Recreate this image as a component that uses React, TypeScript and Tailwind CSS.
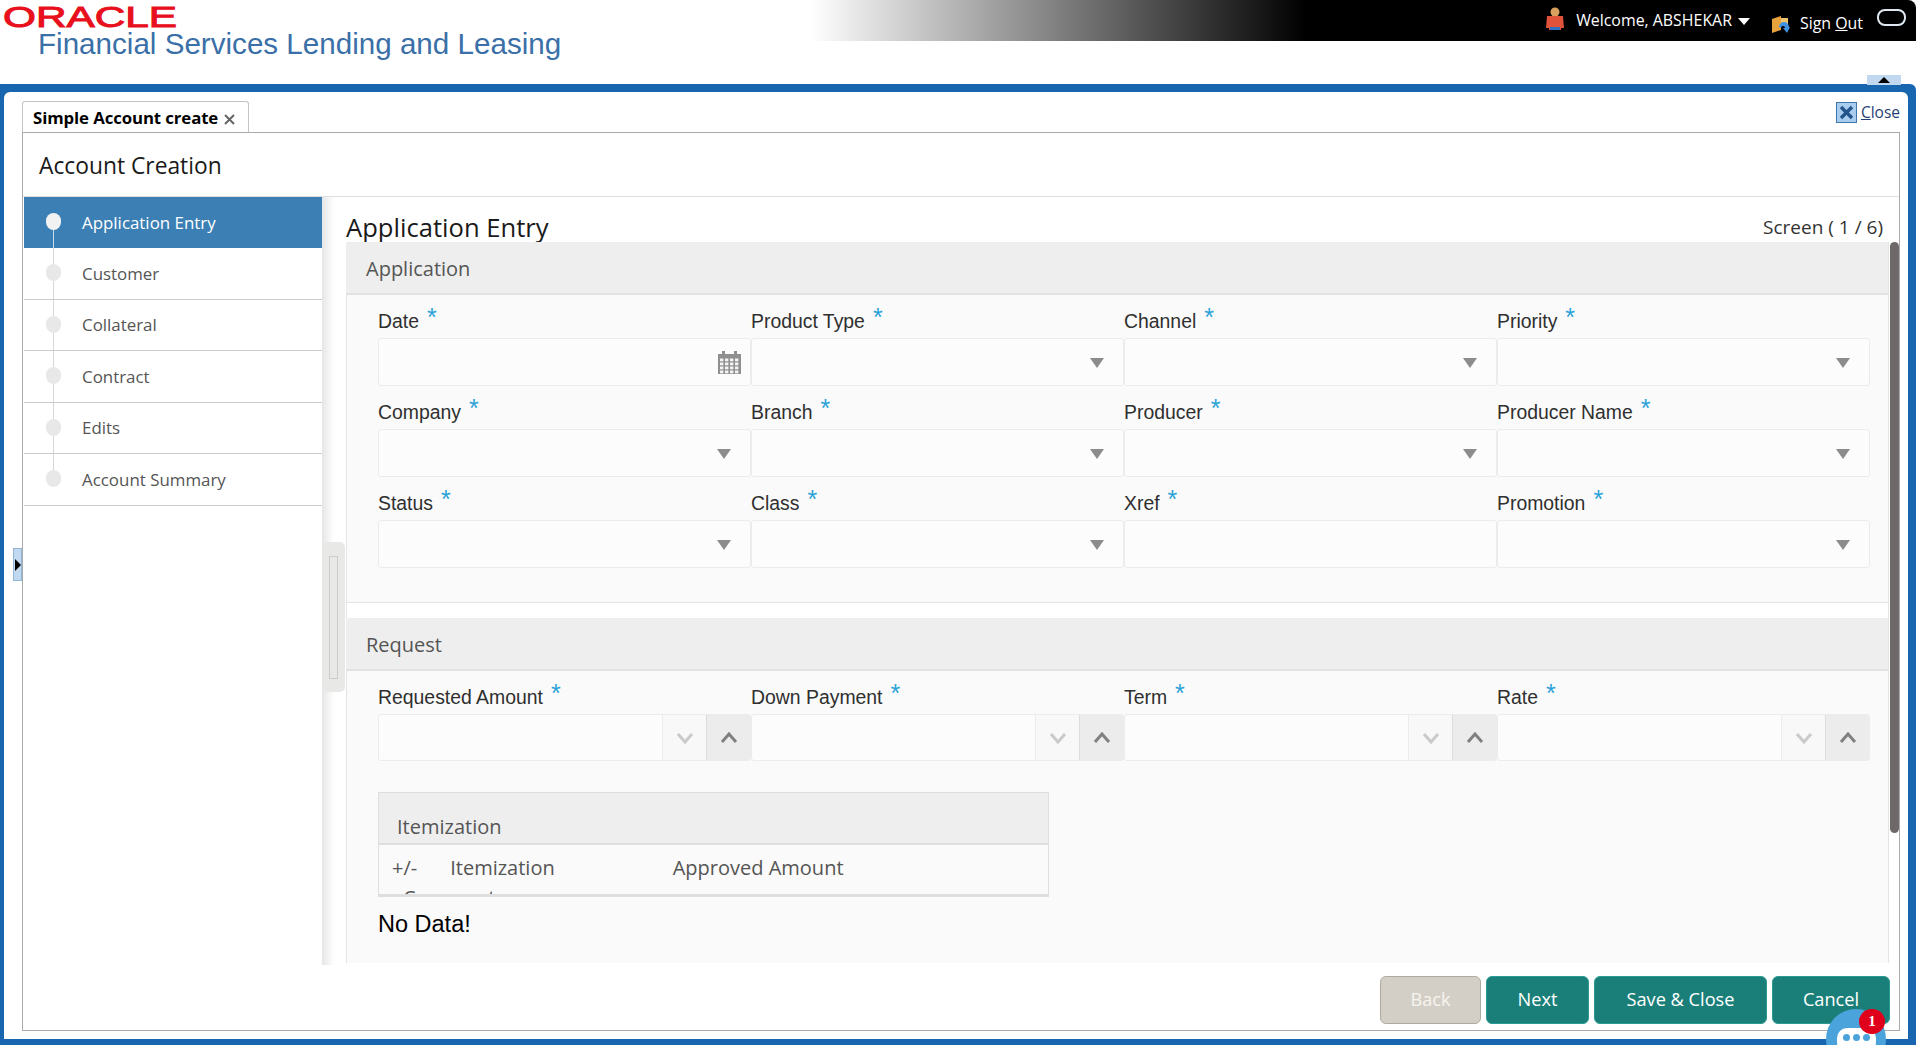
const SEGOE = "font-['Open_Sans',sans-serif]";

function Caret({ className = "" }: { className?: string }) {
  return (
    <svg width="14" height="10" viewBox="0 0 14 10" className={className}>
      <path d="M0 0h14L7 10z" fill="#8c8c8c" />
    </svg>
  );
}

function Calendar() {
  return (
    <svg width="25" height="25" viewBox="0 0 25 25" className="absolute right-[8px] top-[11px]">
      <path d="M1 4h23v20H1z" fill="#8f8f8f" />
      <path d="M5 1h3v5H5zM17 1h3v5h-3z" fill="#8f8f8f" />
      {[9, 13, 17, 21].map((y) =>
        [3, 8, 13, 18].map((x) => <rect key={`${x}-${y}`} x={x} y={y - 0.5} width="3.4" height="2.8" fill="#f4f4f4" />),
      )}
    </svg>
  );
}

function Label({ text }: { text: string }) {
  return (
    <div className="flex h-[43px] items-end pb-[6px] text-[19.4px] leading-[22px] text-[#2f2f2f] font-['Liberation_Sans',sans-serif]">
      <span className="whitespace-nowrap">{text}</span>
      <span className="relative top-[-4px] ml-[8px] text-[25px] leading-[22px] text-[#2ba2d8]">*</span>
    </div>
  );
}

type Kind = "date" | "select" | "text";

function Field({ label, kind }: { label: string; kind: Kind }) {
  return (
    <div>
      <Label text={label} />
      <div className="relative h-[48px] w-[373px] rounded-[3px] border border-[#ececec] bg-[#fcfcfd]">
        {kind === "date" && <Calendar />}
        {kind === "select" && <Caret className="absolute right-[19px] top-[19px]" />}
      </div>
    </div>
  );
}

function Spin({ label }: { label: string }) {
  return (
    <div>
      <Label text={label} />
      <div className="flex h-[47px] w-[373px] rounded-[3px] border border-[#ececec] bg-[#fcfcfd]">
        <div className="flex-1" />
        <div className="flex w-[44px] items-center justify-center border-l border-[#ececec] bg-[#f8f8f8]">
          <svg width="18" height="12" viewBox="0 0 18 12" fill="none" stroke="#cacaca" strokeWidth="3">
            <path d="M2 2l7 8 7-8" />
          </svg>
        </div>
        <div className="flex w-[44px] items-center justify-center border-l border-[#dcdcdc] bg-[#ececec]">
          <svg width="18" height="12" viewBox="0 0 18 12" fill="none" stroke="#808080" strokeWidth="3">
            <path d="M2 10l7-8 7 8" />
          </svg>
        </div>
      </div>
    </div>
  );
}

function SectionHeader({ title }: { title: string }) {
  return (
    <div className={`flex h-[53px] items-center border-b-2 border-[#e2e2e2] bg-[#eeeeee] pl-[20px] pt-[2px] text-[20px] text-[#555555] ${SEGOE}`}>
      {title}
    </div>
  );
}

const steps = ["Application Entry", "Customer", "Collateral", "Contract", "Edits", "Account Summary"];

function Step({ title, index }: { title: string; index: number }) {
  const active = index === 0;
  return (
    <div
      className={`relative flex items-center pl-[58px] text-[16.9px] ${
        active ? "h-[51px] bg-[#3b7fb5] text-white" : "h-[51.6px] border-b border-[#cccccc] bg-white text-[#555555]"
      }`}
    >
      {index > 0 && <div className="absolute left-[29px] top-0 h-[24px] w-px bg-[#d8d8d8]" />}
      {index < 5 && (
        <div className={`absolute bottom-0 left-[29px] top-[26px] w-px ${active ? "bg-[#c9dcea]" : "bg-[#d8d8d8]"}`} />
      )}
      <div
        className={`absolute left-[22px] top-[16px] h-[17px] w-[15px] rounded-full ${active ? "bg-[#f2f2f2]" : "bg-[#e8e8e8]"}`}
      />
      {title}
    </div>
  );
}

function ActionButton({ text, width, disabled }: { text: string; width: string; disabled?: boolean }) {
  return (
    <div
      className={`flex h-[48px] items-center justify-center rounded-[6px] border text-[18.2px] ${width} ${
        disabled ? "border-[#aeaaa2] bg-[#d4cfc6] text-[#f7f5f0]" : "border-[#2a9a92] bg-[#1b7f79] text-white"
      }`}
    >
      {text}
    </div>
  );
}

export default function App() {
  return (
    <div className={`relative h-[1045px] w-[1916px] overflow-hidden bg-white ${SEGOE}`}>
      {/* Masthead */}
      <header className="relative flex h-[84px]">
        <div className="w-[800px] pl-[3px]">
          <div className="h-[29px] origin-left scale-x-[1.41] font-['Liberation_Sans',sans-serif] text-[30px] leading-[33px] text-[#e8101c] [-webkit-text-stroke:1px_#e8101c]">
            ORACLE
          </div>
          <div className="ml-[35px] whitespace-nowrap font-['Liberation_Sans',sans-serif] text-[29.6px] leading-[30px] text-[#3a6fa8]">
            Financial Services Lending and Leasing
          </div>
        </div>
        <div className="flex h-[41px] flex-1 items-center justify-end rounded-tr-[8px] bg-[linear-gradient(90deg,#ffffff_10px,#000000_506px)] font-['Open_Sans',sans-serif] text-[15.9px] text-white">
          <svg width="20" height="24" viewBox="0 0 20 24" className="mb-[3px]">
            <circle cx="10" cy="5" r="4.5" fill="#d9a15e" />
            <path d="M2 9h16l1 12h-3v2H4v-2H1z" fill="#e0533a" />
            <path d="M5 20h10v3H5z" fill="#2f6fc0" />
          </svg>
          <span className="ml-[11px] mt-[1px] whitespace-nowrap">Welcome, ABSHEKAR</span>
          <svg width="12" height="7" viewBox="0 0 12 7" className="ml-[6px] mt-[2px]">
            <path d="M0 0h12L6 7z" fill="#ffffff" />
          </svg>
          <svg width="20" height="20" viewBox="0 0 20 20" className="ml-[21px] mt-[9px]">
            <path d="M1 4l9-3v14l-9 3z" fill="#e8a33d" />
            <path d="M10 3h7v6h-7z" fill="#f0c46c" />
            <path d="M8 12a5 5 0 0 1 10 0l1 0-3 6-4-5 2 0a2 2 0 0 0-4 0z" fill="#3f93e0" />
          </svg>
          <span className="ml-[9px] mt-[7px] whitespace-nowrap">
            Sign <span className="underline">O</span>ut
          </span>
          <div className="mb-[7px] ml-[14px] mr-[10px] h-[17px] w-[29px] rounded-[8px] border-2 border-[#dfe8f0] bg-black" />
        </div>
      </header>

      {/* Collapse tab */}
      <div className="absolute left-[1867px] top-[75px] z-10 flex h-[10px] w-[34px] items-center justify-center bg-[#c0d8f0]">
        <svg width="12" height="6" viewBox="0 0 12 6">
          <path d="M6 0l6 6H0z" fill="#000000" />
        </svg>
      </div>

      {/* Blue frame */}
      <div className="h-[961px] rounded-tr-[6px] bg-[#1866b0] pb-[6px] pl-[4px] pr-[8px] pt-[8px]">
        <div className="relative h-[947px] rounded-t-[6px] bg-white pb-[8px] pl-[18px] pr-[8px] pt-[9px]">
          {/* Tab strip */}
          <div className="flex h-[31px] items-end">
            <div className="flex h-[31px] w-[227px] items-center rounded-t-[3px] border border-b-0 border-[#c4c4c4] pl-[10px] pt-px text-[16.8px] font-bold text-black">
              <span className="whitespace-nowrap tracking-[-0.1px]">Simple Account create</span>
              <svg width="11" height="11" viewBox="0 0 11 11" className="ml-[6px] mt-[3px]" stroke="#666666" strokeWidth="2">
                <path d="M1 1l9 9M10 1l-9 9" />
              </svg>
            </div>
            <div className="ml-auto mb-[8px] flex items-center">
              <svg width="21" height="21" viewBox="0 0 21 21">
                <rect x="0.5" y="0.5" width="20" height="20" fill="#a9cdee" stroke="#3f76ad" />
                <path d="M5 5l11 11M16 5L5 16" stroke="#23548c" strokeWidth="3.4" />
              </svg>
              <span className="ml-[4px] text-[15.5px] text-[#1f3f73]">
                <span className="underline">C</span>lose
              </span>
            </div>
          </div>

          {/* Main box */}
          <div className="h-[899px] border border-[#aaaaaa]">
            <div className="flex h-[64px] items-center border-b border-[#dedede] pl-[16px] pt-[4px] text-[22.8px] text-[#1a1a1a]">
              Account Creation
            </div>
            <div className="flex h-[833px]">
              {/* Steps column */}
              <div className="flex h-[768px] w-[311px] shrink-0 bg-white">
                <div className="ml-px w-[298px]">
                  {steps.map((s, i) => (
                    <Step key={s} title={s} index={i} />
                  ))}
                </div>
                <div className="w-[12px] bg-[linear-gradient(90deg,#e6e6e6,#ffffff)]" />
              </div>
              {/* Content column */}
              <div className="min-w-0 flex-1 pl-[12px]">
                <div className="flex h-[45px] items-end justify-between pr-[16px]">
                  <span className="text-[25.6px] leading-[28px] text-[#1a1a1a]">Application Entry</span>
                  <span className="mb-[3px] text-[19px] leading-[24px] text-[#333333]">Screen ( 1 / 6)</span>
                </div>
                <div className="relative h-[721px] overflow-hidden pr-[10px]">
                  <div className="absolute right-0 top-0 h-[591px] w-[9px] rounded-[5px] bg-[#6e6868]" />
                  <div className="h-full border-r border-[#e4e4e4] bg-white">
                    <SectionHeader title="Application" />
                    <div className="h-[308px] border-b border-l border-[#e4e4e4] bg-[#fafafa] pl-[31px]">
                      <div className="grid grid-cols-[repeat(4,373px)]">
                        <Field label="Date" kind="date" />
                        <Field label="Product Type" kind="select" />
                        <Field label="Channel" kind="select" />
                        <Field label="Priority" kind="select" />
                        <Field label="Company" kind="select" />
                        <Field label="Branch" kind="select" />
                        <Field label="Producer" kind="select" />
                        <Field label="Producer Name" kind="select" />
                        <Field label="Status" kind="select" />
                        <Field label="Class" kind="select" />
                        <Field label="Xref" kind="text" />
                        <Field label="Promotion" kind="select" />
                      </div>
                    </div>
                    <div className="h-[15px] border-l border-[#e4e4e4]" />
                    <SectionHeader title="Request" />
                    <div className="h-[292px] border-l border-[#e4e4e4] bg-[#fafafa] pl-[31px]">
                      <div className="grid grid-cols-[repeat(4,373px)]">
                        <Spin label="Requested Amount" />
                        <Spin label="Down Payment" />
                        <Spin label="Term" />
                        <Spin label="Rate" />
                      </div>
                      <div className="mt-[31px] h-[105px] w-[671px] overflow-hidden border border-[#dedede] border-b-[3px] bg-[#fafafa] text-[20px] text-[#555555]">
                        <div className="flex h-[52px] items-end border-b-2 border-[#dedede] bg-[#eeeeee] pl-[18px] leading-[32px]">
                          Itemization
                        </div>
                        <div className="flex h-[41px] items-center pl-[13px] pt-[5px]">
                          <span>+/-</span>
                          <span className="ml-[33px]">Itemization</span>
                          <span className="ml-[118px]">Approved Amount</span>
                        </div>
                        <div className="pl-[24px] leading-[24px]">Comment</div>
                      </div>
                      <div className="mt-[12px] font-['Liberation_Sans',sans-serif] text-[23.5px] leading-[30px] text-black">
                        No Data!
                      </div>
                    </div>
                  </div>
                </div>
                <div className="flex justify-end gap-[5px] pr-[9px] pt-[13px]">
                  <ActionButton text="Back" width="w-[101px]" disabled />
                  <ActionButton text="Next" width="w-[103px]" />
                  <ActionButton text="Save & Close" width="w-[173px]" />
                  <ActionButton text="Cancel" width="w-[118px]" />
                </div>
              </div>
            </div>
          </div>
        </div>
      </div>

      {/* Splitter handles */}
      <div className="absolute left-[13px] top-[548px] flex h-[33px] w-[9px] items-center justify-center border border-[#93b6d6] bg-[#c0d8f0]">
        <svg width="6" height="12" viewBox="0 0 6 12">
          <path d="M0 0l6 6-6 6z" fill="#000000" />
        </svg>
      </div>
      <div className="absolute left-[322px] top-[542px] flex h-[150px] w-[23px] items-center justify-center rounded-[5px] bg-[#e8e8e6]">
        <div className="h-[123px] w-[9px] border border-[#cccccc]" />
      </div>

      {/* Chat bubble */}
      <div className="absolute left-[1826px] top-[1009px] h-[60px] w-[60px] rounded-full bg-[#4ba3dc]">
        <div className="absolute left-[11px] top-[19px] flex h-[24px] w-[39px] items-start justify-center gap-[3px] rounded-[10px] bg-white pt-[6px]">
          <span className="h-[7px] w-[7px] rounded-full bg-[#4ba3dc]" />
          <span className="h-[7px] w-[7px] rounded-full bg-[#4ba3dc]" />
          <span className="h-[7px] w-[7px] rounded-full bg-[#4ba3dc]" />
        </div>
        <div className="absolute left-[33px] top-0 flex h-[25px] w-[26px] items-center justify-center rounded-full bg-[#e0001b] font-['Liberation_Serif',serif] text-[15px] font-bold text-white">
          1
        </div>
      </div>
    </div>
  );
}
